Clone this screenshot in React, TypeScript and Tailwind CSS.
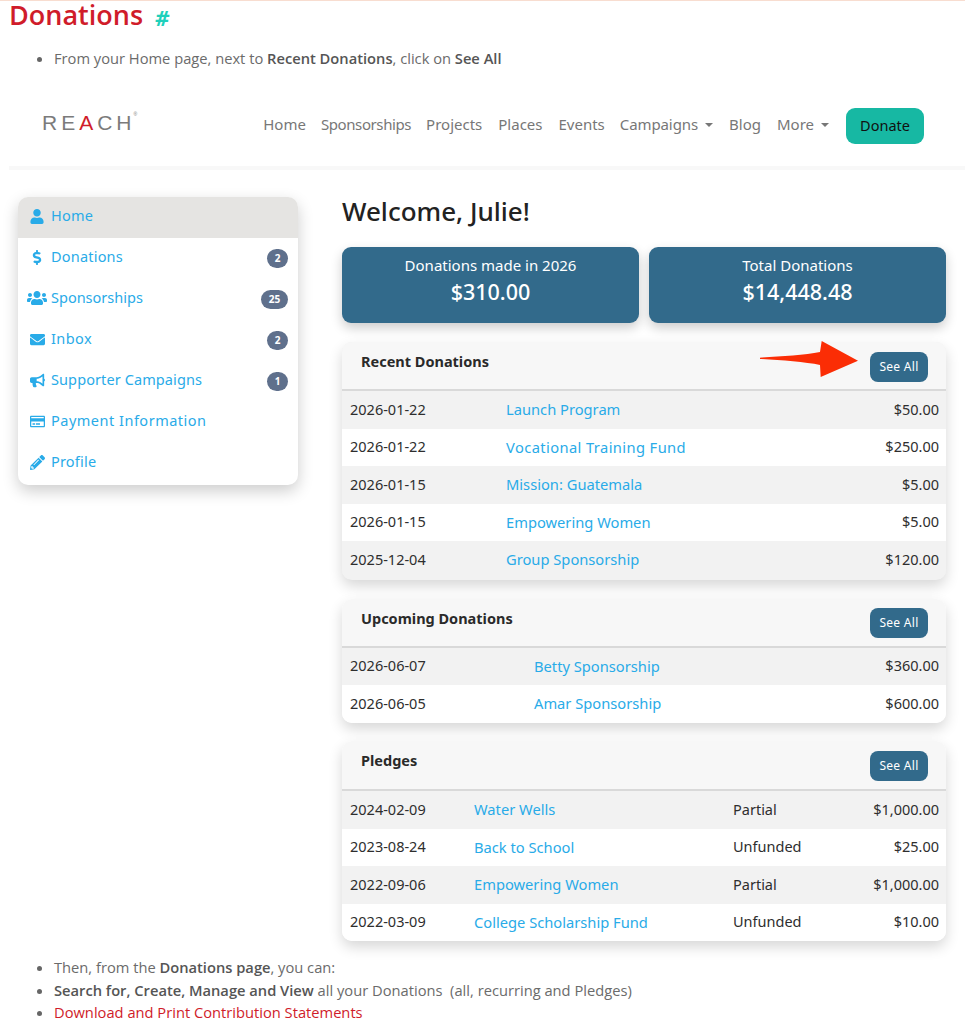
import { FaUser, FaDollarSign, FaUsers, FaEnvelope, FaBullhorn, FaRegCreditCard, FaPencilAlt } from "react-icons/fa";

const side = [
  { icon: <FaUser className="w-[14px] h-[15px]" />, label: "Home", active: true, cls: "tracking-[0.2px]" },
  { icon: <FaDollarSign className="w-[14px] h-[15px]" />, label: "Donations", badge: "2", cls: "tracking-[0.2px]" },
  { icon: <FaUsers className="w-[20px] h-[16px] -ml-[3px] -mr-[2px]" />, label: "Sponsorships", badge: "25", cls: "tracking-[0px]" },
  { icon: <FaEnvelope className="w-[15px] h-[15px]" />, label: "Inbox", badge: "2", cls: "tracking-[0.4px]" },
  { icon: <FaBullhorn className="w-[15px] h-[15px]" />, label: "Supporter Campaigns", badge: "1", cls: "tracking-[0.1px]" },
  { icon: <FaRegCreditCard className="w-[15px] h-[15px]" />, label: "Payment Information", cls: "tracking-[0.5px]" },
  { icon: <FaPencilAlt className="w-[15px] h-[15px]" />, label: "Profile", cls: "tracking-[0.2px]" },
];

type Row = { date: string; name: string; status?: string; amount: string };

function SeeAll() {
  return (
    <button className="h-[30px] w-[58px] rounded-[8px] bg-[#326a8b] text-[12px] tracking-[0.3px] text-white">
      See All
    </button>
  );
}

function Panel({ title, rows, nameW, tall, extra }: { title: string; rows: Row[]; nameW: string; tall?: boolean; extra?: boolean }) {
  return (
    <section className={`overflow-hidden rounded-[10px] shadow-[0_6px_14px_rgba(0,0,0,0.16)] ${extra ? "bg-[#f2f2f2] pb-[1.5px]" : "bg-white"}`}>
      <div className={`flex items-start justify-between border-b-2 border-[#d9d9d9] bg-[#f7f7f7] pl-[19px] pr-[18px] ${tall ? "h-[50px]" : "h-[49px]"}`}>
        <h3 className="pt-[9px] text-[14.5px] font-bold leading-[20px] text-[#2a2a2a]">{title}</h3>
        <div className="pt-[9.5px]"><SeeAll /></div>
      </div>
      {rows.map((r, i) => (
        <div key={r.date + r.name} className={`flex h-[37.5px] items-center pl-[8px] pr-[7px] text-[14.5px] text-[#2e2e2e] ${i % 2 === 0 ? "bg-[#f2f2f2]" : "bg-white"}`}>
          <span className={`shrink-0 ${nameW}`}>{r.date}</span>
          <a className={`mb-[1px] flex-1 text-[14.7px] text-[#29abe8] ${r.name.startsWith("Vocational") ? "tracking-[0.4px]" : ""}`}>{r.name}</a>
          {r.status && <span className="w-[106px]">{r.status}</span>}
          <span className="w-[100px] text-right">{r.amount}</span>
        </div>
      ))}
    </section>
  );
}

const recent: Row[] = [
  { date: "2026-01-22", name: "Launch Program", amount: "$50.00" },
  { date: "2026-01-22", name: "Vocational Training Fund", amount: "$250.00" },
  { date: "2026-01-15", name: "Mission: Guatemala", amount: "$5.00" },
  { date: "2026-01-15", name: "Empowering Women", amount: "$5.00" },
  { date: "2025-12-04", name: "Group Sponsorship", amount: "$120.00" },
];
const upcoming: Row[] = [
  { date: "2026-06-07", name: "Betty Sponsorship", amount: "$360.00" },
  { date: "2026-06-05", name: "Amar Sponsorship", amount: "$600.00" },
];
const pledges: Row[] = [
  { date: "2024-02-09", name: "Water Wells", status: "Partial", amount: "$1,000.00" },
  { date: "2023-08-24", name: "Back to School", status: "Unfunded", amount: "$25.00" },
  { date: "2022-09-06", name: "Empowering Women", status: "Partial", amount: "$1,000.00" },
  { date: "2022-03-09", name: "College Scholarship Fund", status: "Unfunded", amount: "$10.00" },
];

export default function App() {
  return (
    <div className="h-[1029px] w-[965px] overflow-hidden border-t border-[#f8ddd0] bg-white font-['Open_Sans',sans-serif]">
      <h1 className="ml-[9px] flex h-[28px] items-center text-[27px] font-semibold leading-[28px] text-[#d01c2a]">
        Donations
        <span className="ml-[12px] mt-[3px] text-[22px] font-bold italic text-[#1fd0bb]">#</span>
      </h1>
      <ul className="mt-[18px] list-disc pl-[54px] text-[14.7px] leading-[22px] text-[#6b6b6b] marker:text-[#666]">
        <li>From your Home page, next to <b className="font-semibold text-[#555]">Recent Donations</b>, click on <b className="font-semibold text-[#555]">See All</b></li>
      </ul>

      <div className="relative ml-[9px] mt-[17px] h-[871px] w-[956px] font-['Noto_Sans',sans-serif]">
        <header className="flex h-[84px] items-center justify-between border-b-4 border-[#f8f8f8] pl-[33px] pr-[41px]">
          <div className="mb-[7px] flex items-start font-['Liberation_Sans',sans-serif] text-[21px] leading-none tracking-[4px] text-[#7b7b7b]">
            RE<span className="text-[#d01c2a]">A</span>CH<span className="-ml-[2px] text-[5px]">®</span>
          </div>
          <nav className="flex items-center text-[15px] text-[#777]">
            <a className="mb-[3px] mr-[15px]">Home</a>
            <a className="mb-[3px] mr-[15px] tracking-[-0.4px]">Sponsorships</a>
            <a className="mb-[3px] mr-[16px]">Projects</a>
            <a className="mb-[3px] mr-[16px]">Places</a>
            <a className="mb-[3px] mr-[15px]">Events</a>
            <a className="mb-[3px] mr-[16px] flex items-center tracking-[-0.1px]">Campaigns<i className="ml-[7px] mt-[1px] border-x-[4px] border-t-[4px] border-x-transparent border-t-[#777]" /></a>
            <a className="mb-[3px] mr-[16px]">Blog</a>
            <a className="mb-[3px] mr-[17px] flex items-center">More<i className="ml-[7px] mt-[1px] border-x-[4px] border-t-[4px] border-x-transparent border-t-[#777]" /></a>
            <button className="mb-[1px] h-[36px] w-[78px] rounded-[9px] bg-[#17b8a3] text-[14.5px] text-[#111]">Donate</button>
          </nav>
        </header>

        <div className="flex items-start pl-[9px] pr-[19px] pt-[27px]">
          <aside className="w-[280px] shrink-0 overflow-hidden rounded-[10px] bg-white shadow-[0_6px_16px_rgba(0,0,0,0.2)]">
            {side.map((s) => (
              <div key={s.label} className={`flex h-[41.14px] items-center pl-[12px] pr-[10px] text-[#29abe8] ${s.active ? "bg-[#e5e4e2]" : ""}`}>
                <span className="mb-[3px] flex w-[21px] shrink-0">{s.icon}</span>
                <span className={`mb-[4px] flex-1 text-[14.5px] ${s.cls}`}>{s.label}</span>
                {s.badge && (
                  <span className={`mb-[1px] flex h-[19px] items-center justify-center rounded-full bg-[#5f708c] text-[10px] font-bold text-white ${s.badge.length > 1 ? "w-[27px]" : "w-[21px]"}`}>{s.badge}</span>
                )}
              </div>
            ))}
          </aside>

          <main className="ml-[44px] flex-1">
            <h2 className="-mt-[1px] text-[26px] font-medium leading-[30px] text-[#222]">Welcome, Julie!</h2>
            <div className="mt-[21px] grid grid-cols-2 gap-[10px]">
              {[["Donations made in 2026", "$310.00"], ["Total Donations", "$14,448.48"]].map(([a, b]) => (
                <div key={a} className="flex h-[76px] flex-col items-center rounded-[9px] bg-[#326a8b] pt-[8px] text-white shadow-[0_5px_12px_rgba(0,0,0,0.2)]">
                  <span className="text-[15px] leading-[20px]">{a}</span>
                  <span className="text-[21.5px] font-medium leading-[33px]">{b}</span>
                </div>
              ))}
            </div>
            <div className="mt-[19px] flex flex-col gap-[18.5px]">
              <Panel title="Recent Donations" rows={recent} nameW="w-[156px]" extra />
              <Panel title="Upcoming Donations" rows={upcoming} nameW="w-[184px]" />
              <Panel title="Pledges" rows={pledges} nameW="w-[124px]" tall />
            </div>
          </main>
        </div>

        <svg className="absolute left-[751px] top-[254px] h-[40px] w-[100px]" viewBox="0 0 100 40" aria-hidden="true">
          <path d="M0 17.7 C20 16.5 45 15 60 12 L61.7 1 L98 20.7 L60.7 37 L60 25 C45 22 20 20 0 19 Z" fill="#fb2d05" />
        </svg>
      </div>

      <ul className="mt-[-1px] list-disc pl-[54px] text-[14.7px] leading-[22.5px] text-[#6b6b6b] marker:text-[#666]">
        <li>Then, from the <b className="font-semibold text-[#555]">Donations page</b>, you can:</li>
        <li><b className="font-semibold text-[#555]">Search for, Create, Manage and View</b> all your Donations&nbsp; (all, recurring and Pledges)</li>
        <li className="text-[#d01c2a]">Download and Print Contribution Statements</li>
      </ul>
    </div>
  );
}
